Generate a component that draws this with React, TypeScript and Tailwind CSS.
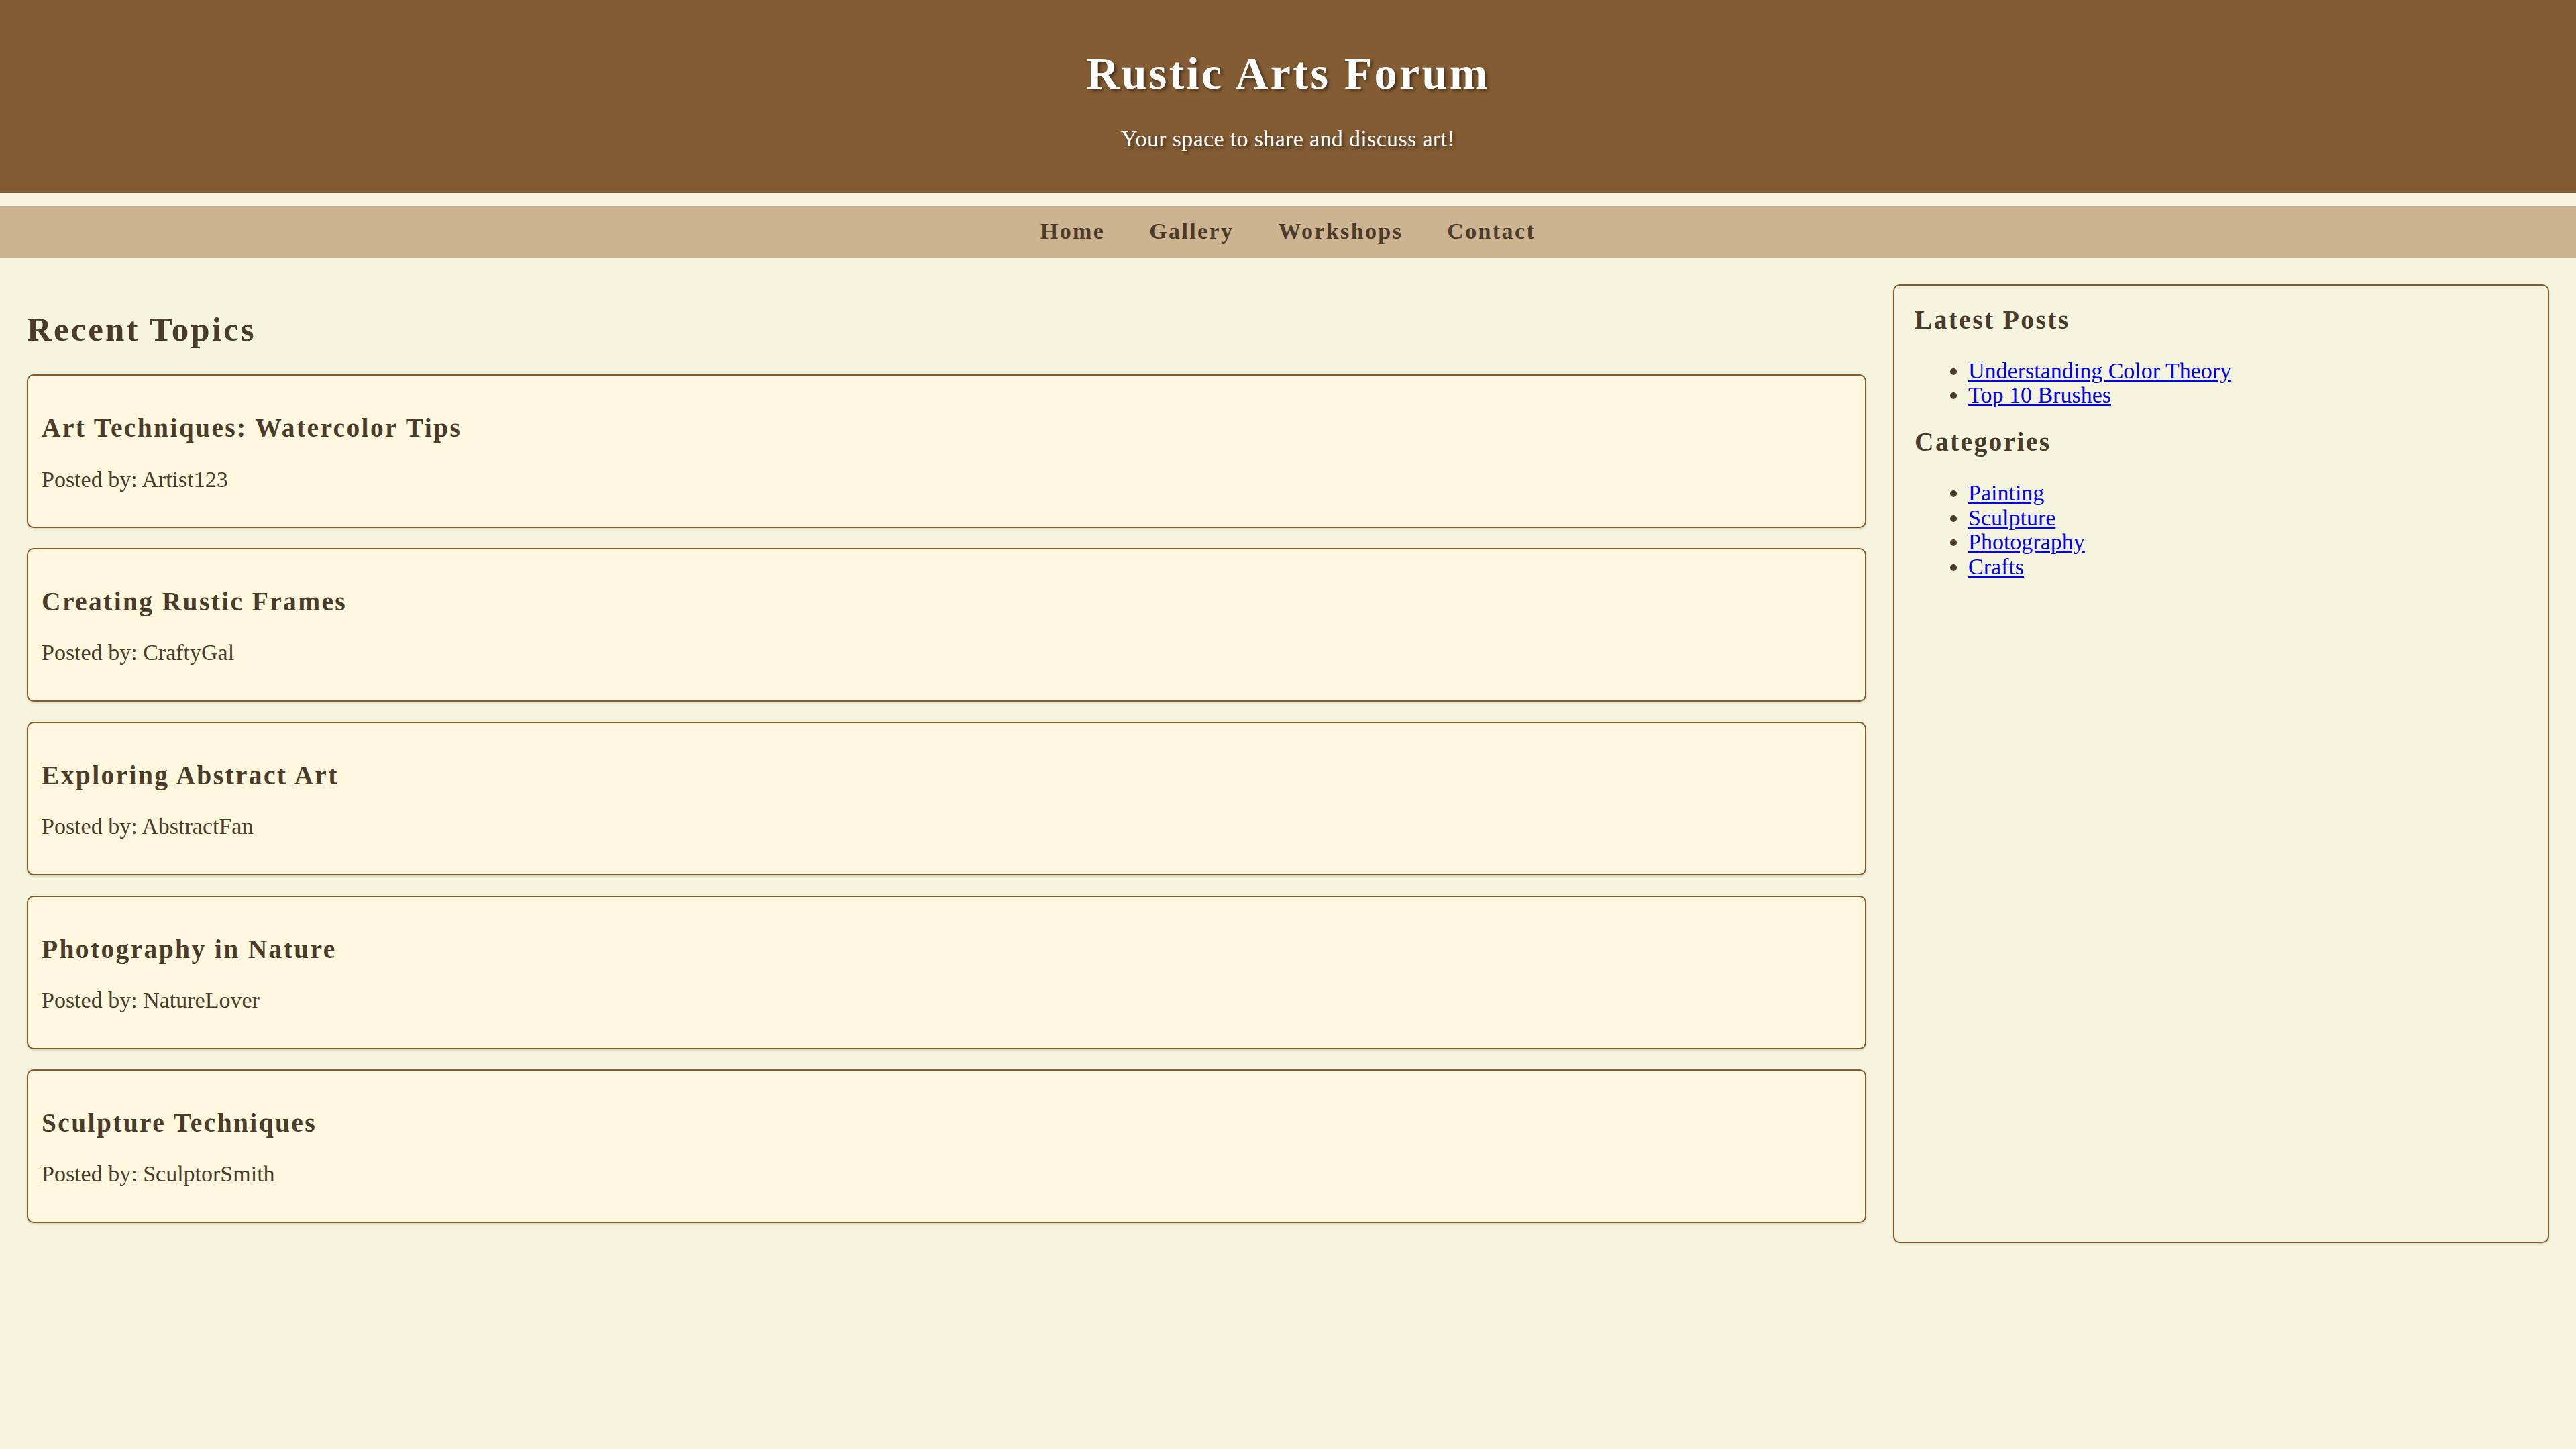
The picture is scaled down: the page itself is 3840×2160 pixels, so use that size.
const topics = [
  { title: 'Art Techniques: Watercolor Tips', author: 'Artist123' },
  { title: 'Creating Rustic Frames', author: 'CraftyGal' },
  { title: 'Exploring Abstract Art', author: 'AbstractFan' },
  { title: 'Photography in Nature', author: 'NatureLover' },
  { title: 'Sculpture Techniques', author: 'SculptorSmith' },
];

const latestPosts = ['Understanding Color Theory', 'Top 10 Brushes'];
const categories = ['Painting', 'Sculpture', 'Photography', 'Crafts'];
const navLinks = ['Home', 'Gallery', 'Workshops', 'Contact'];

export default function App() {
  return (
    <div className="min-h-screen bg-[#f5f4df] text-[#4a3b2a] font-['Georgia','Liberation_Serif',serif]">
      {/* header */}
      <header className="bg-[#845c33] text-white text-center pt-[30px] pb-[30px]">
        <h1 className="mt-[43px] text-[68px] leading-[72.7px] font-bold tracking-[0.05em] [text-shadow:3px_3px_5px_rgba(0,0,0,0.5)]">
          Rustic Arts Forum
        </h1>
        <p className="mt-[43px] mb-[32px] text-[34px] leading-[36.4px] tracking-[0.01em] [text-shadow:3px_3px_5px_rgba(0,0,0,0.5)]">
          Your space to share and discuss art!
        </p>
      </header>

      {/* nav */}
      <nav className="mt-[20px] bg-[#cdb491] py-[20px] flex justify-center gap-[66px]">
        {navLinks.map((link) => (
          <a
            key={link}
            href="#"
            className="text-[34px] leading-[36.4px] font-bold tracking-[0.07em] text-[#4a3b2a] no-underline"
          >
            {link}
          </a>
        ))}
      </nav>

      <div className="flex p-[40px]">
        {/* recent topics */}
        <main className="flex-[3] min-w-0">
          <h2 className="mt-[40px] mb-[40px] text-[51px] leading-[54.5px] font-bold tracking-[0.06em]">
            Recent Topics
          </h2>
          {topics.map((topic) => (
            <div
              key={topic.title}
              className="mb-[30px] bg-[#fff8df] border-2 border-[#865a2c] rounded-[10px] p-[20px] shadow-[0_2px_3px_rgba(0,0,0,0.12)]"
            >
              <h3 className="mt-[37px] mb-[37px] text-[39.5px] leading-[42.5px] font-bold tracking-[0.06em]">
                {topic.title}
              </h3>
              <p className="mb-[32px] text-[34px] leading-[36.4px]">
                Posted by: {topic.author}
              </p>
            </div>
          ))}
        </main>

        {/* sidebar */}
        <aside className="flex-1 min-w-0 ml-[40px] p-[30px] bg-[#f5f4df] border-2 border-[#865a2c] rounded-[10px] shadow-[0_2px_3px_rgba(0,0,0,0.12)]">
          <h3 className="mb-[37px] text-[39.5px] leading-[42.5px] font-bold tracking-[0.06em]">Latest Posts</h3>
          <ul className="list-disc pl-[80px] mb-[30px]">
            {latestPosts.map((post) => (
              <li key={post} className="text-[34px] leading-[36.4px] marker:text-[#4a3b2a]">
                <a href="#" className="text-[#0000ee] underline">
                  {post}
                </a>
              </li>
            ))}
          </ul>
          <h3 className="mb-[37px] text-[39.5px] leading-[42.5px] font-bold tracking-[0.06em]">Categories</h3>
          <ul className="list-disc pl-[80px]">
            {categories.map((cat) => (
              <li key={cat} className="text-[34px] leading-[36.4px] marker:text-[#4a3b2a]">
                <a href="#" className="text-[#0000ee] underline">
                  {cat}
                </a>
              </li>
            ))}
          </ul>
        </aside>
      </div>
    </div>
  );
}
